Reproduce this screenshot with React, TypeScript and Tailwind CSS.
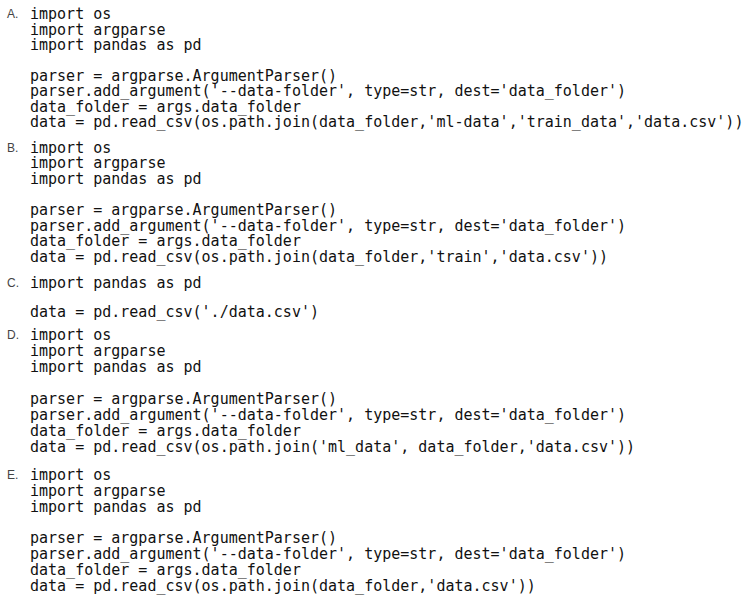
import React from "react";

type Opt = { label: string; lines: string[]; mt: string; lh: string; blank: string };

const full = (last: string) => [
  "import os",
  "import argparse",
  "import pandas as pd",
  "",
  "parser = argparse.ArgumentParser()",
  "parser.add_argument('--data-folder', type=str, dest='data_folder')",
  "data_folder = args.data_folder",
  last,
];

const opts: Opt[] = [
  {
    label: "A.",
    mt: "mt-[7px]",
    lh: "h-[15.5px] leading-[15.5px]",
    blank: "h-[15px]",
    lines: full("data = pd.read_csv(os.path.join(data_folder,'ml-data','train_data','data.csv'))"),
  },
  {
    label: "B.",
    mt: "mt-[10px]",
    lh: "h-[15.5px] leading-[15.5px]",
    blank: "h-[16px]",
    lines: full("data = pd.read_csv(os.path.join(data_folder,'train','data.csv'))"),
  },
  {
    label: "C.",
    mt: "mt-[11px]",
    lh: "h-[15px] leading-[15px]",
    blank: "h-[14px]",
    lines: ["import pandas as pd", "", "data = pd.read_csv('./data.csv')"],
  },
  {
    label: "D.",
    mt: "mt-[7px]",
    lh: "h-[16px] leading-[16px]",
    blank: "h-[16px]",
    lines: full("data = pd.read_csv(os.path.join('ml_data', data_folder,'data.csv'))"),
  },
  {
    label: "E.",
    mt: "mt-[12px]",
    lh: "h-[16px] leading-[16px]",
    blank: "h-[15px]",
    lines: full("data = pd.read_csv(os.path.join(data_folder,'data.csv'))"),
  },
];

export default function App() {
  return (
    <div className="w-[750px] h-[600px] bg-white overflow-hidden flex flex-col">
      {opts.map((o) => (
        <div key={o.label} className={`flex ${o.mt}`}>
          <div
            className={`w-[30px] pl-[7px] text-[12px] text-[#444] font-['Liberation_Sans',Arial,sans-serif] ${o.lh}`}
          >
            {o.label}
          </div>
          <div className="flex flex-col font-['DejaVu_Sans_Mono','Liberation_Mono',monospace] text-[15px] text-[#111] whitespace-pre">
            {o.lines.map((l, i) =>
              l === "" ? (
                <div key={i} className={o.blank} />
              ) : (
                <div key={i} className={o.lh}>
                  {l}
                </div>
              )
            )}
          </div>
        </div>
      ))}
    </div>
  );
}
